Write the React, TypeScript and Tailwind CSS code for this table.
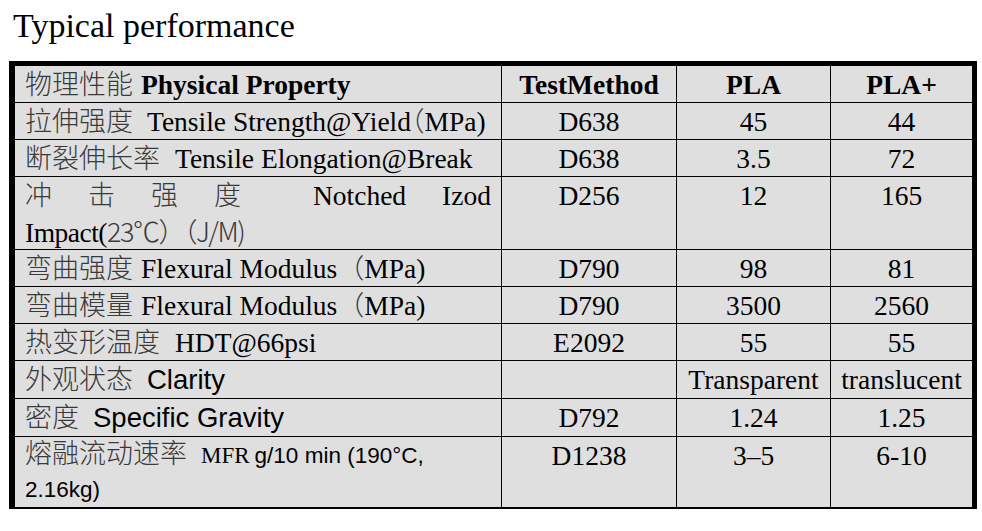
import type { ReactNode } from "react";

const serif = "font-['Liberation_Serif','Times_New_Roman',serif]";
const sans = "font-['Liberation_Sans',Arial,sans-serif]";
const cjk = "font-['Noto_Sans_CJK_SC',sans-serif] font-light text-[#3a3a3a] text-[27px] leading-[20px]";
const cols = "grid grid-cols-[486px_175px_154px_142px]";

function Zh({ children, className = "" }: { children: ReactNode; className?: string }) {
  return <span className={`${cjk} ${className}`}>{children}</span>;
}

function Row({
  h,
  label,
  cells,
  bold,
  last,
}: {
  h: string;
  label: ReactNode;
  cells: string[];
  bold?: boolean;
  last?: boolean;
}) {
  return (
    <div className={`${cols} ${h} ${last ? "" : "border-b border-black"}`}>
      <div className="pl-[10px] pr-[10px]">{label}</div>
      {cells.map((c, i) => (
        <div
          key={i}
          className={`border-l border-black text-center pt-[1px] leading-[36px] whitespace-nowrap ${bold ? "font-bold" : ""}`}
        >
          {c}
        </div>
      ))}
    </div>
  );
}

export default function App() {
  return (
    <div className={`w-[982px] h-[531px] bg-white text-black ${serif}`}>
      <div className="pt-[6px] pl-[13px] text-[34px] leading-[40px]">Typical performance</div>

      <div className="mt-[15px] ml-[9px] w-[968px] border-t-[5px] border-l-[6px] border-r-[5px] border-b-2 border-black bg-[#dfdfdf] text-[27.5px]">
        <Row
          h="h-[37px]"
          bold
          cells={["TestMethod", "PLA", "PLA+"]}
          label={
            <div className="pt-[1px] leading-[36px] whitespace-nowrap">
              <Zh>物理性能</Zh>
              <span className="ml-[8px] font-bold">Physical Property</span>
            </div>
          }
        />
        <Row
          h="h-[37px]"
          cells={["D638", "45", "44"]}
          label={
            <div className="pt-[1px] leading-[36px] whitespace-nowrap">
              <Zh>拉伸强度</Zh>
              <span className="ml-[14px]">Tensile Strength@Yield</span>
              <Zh className="[font-feature-settings:'halt']">（</Zh>
              <span>MPa)</span>
            </div>
          }
        />
        <Row
          h="h-[37px]"
          cells={["D638", "3.5", "72"]}
          label={
            <div className="pt-[1px] leading-[36px] whitespace-nowrap">
              <Zh>断裂伸长率</Zh>
              <span className="ml-[15px]">Tensile Elongation@Break</span>
            </div>
          }
        />
        <Row
          h="h-[73px]"
          cells={["D256", "12", "165"]}
          label={
            <div className="leading-[38px]">
              <div className="flex items-baseline justify-between whitespace-nowrap">
                <Zh>冲</Zh>
                <Zh>击</Zh>
                <Zh>强</Zh>
                <Zh>度</Zh>
                <span />
                <span>Notched</span>
                <span>Izod</span>
              </div>
              <div className="whitespace-nowrap -mt-[1px]">
                <span className="tracking-[-0.5px]">Impact(</span>
                <Zh className="tracking-[-1.5px]">23℃）（J/M)</Zh>
              </div>
            </div>
          }
        />
        <Row
          h="h-[37px]"
          cells={["D790", "98", "81"]}
          label={
            <div className="pt-[1px] leading-[36px] whitespace-nowrap">
              <Zh>弯曲强度</Zh>
              <span className="ml-[8px]">Flexural Modulus</span>
              <Zh>（</Zh>
              <span>MPa)</span>
            </div>
          }
        />
        <Row
          h="h-[37px]"
          cells={["D790", "3500", "2560"]}
          label={
            <div className="pt-[1px] leading-[36px] whitespace-nowrap">
              <Zh>弯曲模量</Zh>
              <span className="ml-[8px]">Flexural Modulus</span>
              <Zh>（</Zh>
              <span>MPa)</span>
            </div>
          }
        />
        <Row
          h="h-[37px]"
          cells={["E2092", "55", "55"]}
          label={
            <div className="pt-[1px] leading-[36px] whitespace-nowrap">
              <Zh>热变形温度</Zh>
              <span className="ml-[15px]">HDT@66psi</span>
            </div>
          }
        />
        <Row
          h="h-[38px]"
          cells={["", "Transparent", "translucent"]}
          label={
            <div className="pt-[1px] leading-[36px] whitespace-nowrap">
              <Zh>外观状态</Zh>
              <span className={`ml-[14px] ${sans}`}>Clarity</span>
            </div>
          }
        />
        <Row
          h="h-[38px]"
          cells={["D792", "1.24", "1.25"]}
          label={
            <div className="pt-[1px] leading-[36px] whitespace-nowrap">
              <Zh>密度</Zh>
              <span className={`ml-[14px] ${sans}`}>Specific Gravity</span>
            </div>
          }
        />
        <Row
          h="h-[70px]"
          last
          cells={["D1238", "3–5", "6-10"]}
          label={
            <div className="leading-[34px] whitespace-nowrap">
              <div>
                <Zh>熔融流动速率</Zh>
                <span className="ml-[14px] text-[23px]">MFR</span>
                <span className={`ml-[5px] text-[22.5px] ${sans}`}>g/10 min (190°C,</span>
              </div>
              <div className={`text-[22.5px] ${sans}`}>2.16kg)</div>
            </div>
          }
        />
      </div>
    </div>
  );
}
